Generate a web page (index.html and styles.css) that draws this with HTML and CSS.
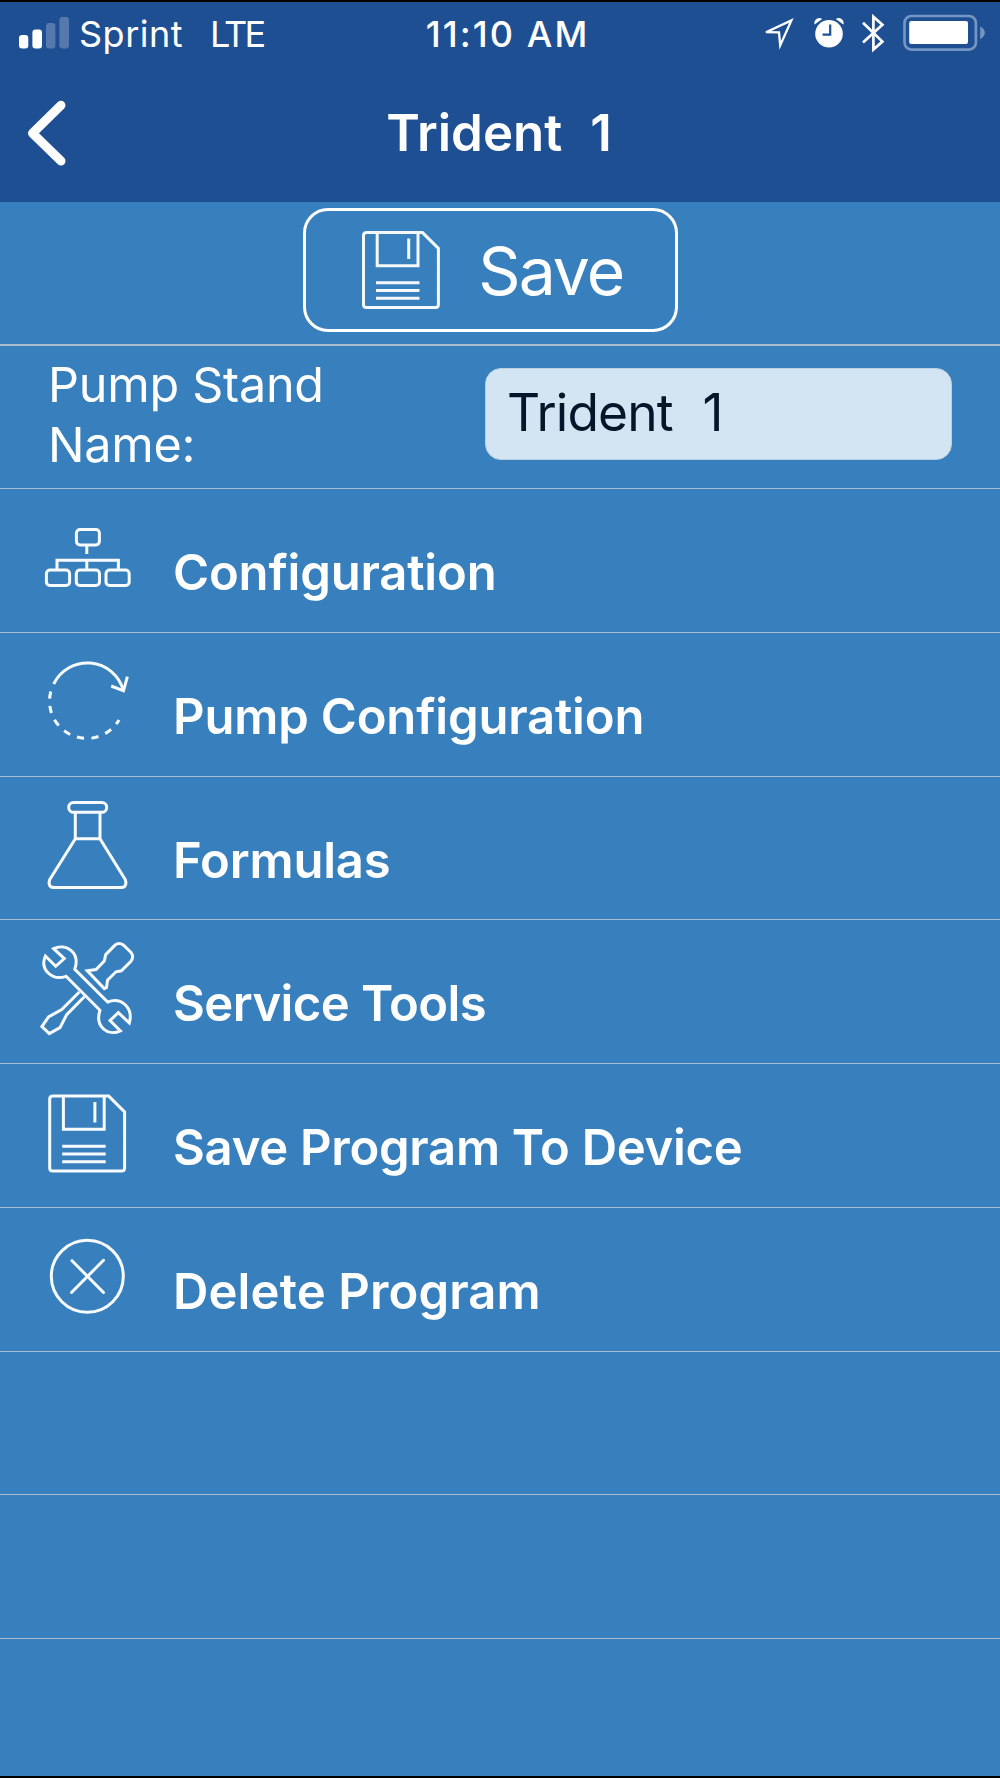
FILE: index.html
```html
<!DOCTYPE html>
<html lang="en">
<head>
<meta charset="utf-8">
<title>Trident 1</title>
<link rel="stylesheet" href="styles.css">
</head>
<body>
<div class="screen">
  <header class="header">
    <div class="status">
      <div class="carrier">
        <svg class="signal" width="50" height="40" viewBox="19 13 50 40" fill="#fff">
          <rect x="19" y="35" width="9.3" height="13.6" rx="3"/>
          <rect x="32.4" y="29.5" width="9.6" height="19.1" rx="3"/>
          <g opacity=".24"><rect x="46" y="23" width="9.4" height="25.6" rx="3"/><rect x="59.4" y="17" width="9.6" height="31.6" rx="3"/></g>
        </svg>
        <span class="name">Sprint</span>
        <span class="network">LTE</span>
      </div>
      <div class="time">11:10 AM</div>
      <div class="indicators">
        <svg width="31" height="40" viewBox="763 13 31 40" fill="none" stroke="#fff" stroke-width="2.3"><path d="M766 32.2L791.4 20.4L780.2 45.4L779 32.4Z"/></svg>
        <svg width="30" height="40" viewBox="814 13 30 40">
          <circle cx="829" cy="33.8" r="13.8" fill="#fff"/>
          <path d="M814.6 24.6a5 5 0 0 1 7.6-5.6zM843.4 24.6a5 5 0 0 0-7.6-5.6z" fill="#fff"/>
          <path d="M830.2 24.6V34.6H822.6" fill="none" stroke="#1f4f93" stroke-width="2.2"/>
        </svg>
        <svg width="23" height="40" viewBox="862 13 23 40" fill="none" stroke="#fff" stroke-width="2.7"><path d="M863 22.8L882.4 41.6L873.4 49.6V16.8L882.4 24.8L863 42.6"/></svg>
        <svg width="84" height="40" viewBox="902 13 84 40">
          <rect x="904.5" y="16" width="71.4" height="33.6" rx="7" fill="none" stroke="#7396c2" stroke-width="2.7"/>
          <rect x="909.2" y="21" width="58.8" height="23" rx="2" fill="#fff"/>
          <path d="M980.2 26.6q4.6 2.2 4.6 6.2t-4.6 6.4z" fill="#7396c2"/>
        </svg>
      </div>
    </div>
    <div class="nav">
      <svg class="back" width="40" height="68" viewBox="0 0 40 68" fill="none" stroke="#fff" stroke-width="9" stroke-linecap="round" stroke-linejoin="round"><path d="M34 6.3L5.5 34.2L34 62"/></svg>
      <h1 class="title">Trident  1</h1>
    </div>
  </header>

  <div class="save-row">
    <button class="save" type="button">
      <svg width="78" height="78" viewBox="0 0 78 78" fill="none" stroke="#f4f8fb" stroke-width="3"><path d="M4 1.6H60.5L76.4 17.4V73.5q0 3-3 3H4.5q-3 0-3-3V4.5q0-3 3-3M15.2 2V34.8H56V2M46.7 7.5V28M14 51.8H57.5M14 59.5H57.5M14 67.3H57.5"/></svg>
      <span>Save</span>
    </button>
  </div>

  <div class="name-row">
    <label class="name-label" for="stand">Pump Stand<br>Name:</label>
    <input class="name-input" id="stand" type="text" value="Trident  1">
  </div>

  <div class="row item">
    <svg class="icon" viewBox="0 1.500 100 100"><rect x="39.4" y="23" width="23" height="15.4" rx="3.6"/><path d="M49.8 39V47.6M20 62.5V53.8H81.4V62.5M49.8 53.8V62.5"/><rect x="9.4" y="63.6" width="23.2" height="15.4" rx="3.6"/><rect x="39.3" y="63.6" width="23.2" height="15.4" rx="3.6"/><rect x="69" y="63.6" width="23.2" height="15.4" rx="3.6"/></svg>
    <span class="label">Configuration</span>
  </div>
  <div class="row item">
    <svg class="icon" viewBox="0 0 100 100"><path d="M16.7 33A37.3 37.3 0 0 1 86.3 39.5M74.2 35L86.5 39.8L90.4 25.7"/><path stroke-dasharray="7.2 7.35" d="M13.8 40.5A37.3 37.3 0 0 0 82 69"/></svg>
    <span class="label">Pump Configuration</span>
  </div>
  <div class="row item">
    <svg class="icon" viewBox="0 .7 100 100"><rect x="31.7" y="8.2" width="38" height="9.8" rx="4.9"/><path d="M38.3 18V44.5L12.6 85.5Q10.5 93.2 17.5 93.2H83.5Q90.5 93.2 88.4 85.5L63 44.5V18M38.3 44.5H63"/></svg>
    <span class="label">Formulas</span>
  </div>
  <div class="row item">
    <svg class="icon" viewBox="0 .7 100 100"><path d="M16.6 10.3C29 4.5 43.5 14 37.8 31L70.7 63.7C85 58.5 96.5 70 92.3 84.7L81.3 74.3L73 82.3L83.3 92.5C71 98.5 57.5 88 63 72L29 38C15 43 2.5 31 8.4 17.7L18.7 28L27.3 20.3Z"/><path d="M50.3 32.5L59 31.3L67.3 22.7L68.7 16.3L78 6.9Q81.8 3.5 86.3 6.7L94.3 14.5Q97.2 18.7 93.7 23.3L84.3 32.5L79 33.5L70.5 42L69.5 49.3L67.3 50.3Z"/><path d="M42.3 53.7L24.7 71.3L11.5 78.7L4.9 88.3L12.3 95.3L23 89.3L29.7 76.3L47.3 58.5"/></svg>
    <span class="label tools">Service Tools</span>
  </div>
  <div class="row item">
    <svg class="icon" viewBox="-11.2 -11.5 100 100"><path d="M4 1.6H60.5L76.4 17.4V73.5q0 3-3 3H4.5q-3 0-3-3V4.5q0-3 3-3M15.2 2V34.8H56V2M46.7 7.5V28M14 51.8H57.5M14 59.5H57.5M14 67.3H57.5"/></svg>
    <span class="label program">Save Program To Device</span>
  </div>
  <div class="row item">
    <svg class="icon" viewBox="0 0 100 100"><circle cx="50.3" cy="50.3" r="36"/><path stroke-linecap="round" d="M35 34.7L66.5 66.5M66.5 34.3L34.5 66.5"/></svg>
    <span class="label delete">Delete Program</span>
  </div>
  <div class="row"></div>
  <div class="row"></div>
</div>
</body>
</html>
```
FILE: styles.css
```css
* { box-sizing: border-box; }
body {
  margin: 0;
  background: #387fbd;
  font-family: Inter, "Liberation Sans", sans-serif;
  color: #fff;
}
svg { display: block; flex: none; }
.screen {
  width: 1000px;
  height: 1778px;
  overflow: hidden;
  border-top: 2px solid #000;
  border-bottom: 2px solid #000;
}
.header { height: 200px; background: #1f4f93; }
.status {
  display: grid;
  grid-template-columns: 406.7px 1fr auto;
  align-items: center;
  height: 62px;
  padding: 0 14px 0 19px;
  font-size: 36px;
  line-height: 44px;
}
.carrier, .indicators { display: flex; align-items: center; }
.name { margin: 1px 0 0 10px; letter-spacing: .5px; }
.network { margin: 1px 0 0 27px; letter-spacing: -2.8px; }
.time { margin-top: 1px; font-weight: 500; letter-spacing: 2.1px; }
.indicators svg + svg { margin-left: 17px; }
.indicators svg:nth-child(2) { margin-left: 20px; }
.indicators svg:nth-child(3) { margin-left: 18px; }
.nav {
  display: flex;
  align-items: center;
  height: 138px;
  padding-left: 27px;
}
.title {
  margin: 0 0 2px 319.2px;
  font-size: 51px;
  font-weight: 600;
  white-space: pre;
  word-spacing: 1.1px;
}
.save-row {
  display: flex;
  height: 144px;
  padding: 6px 0 0 303px;
  border-bottom: 2px solid #a9bccf;
}
.save {
  display: flex;
  align-items: center;
  width: 375px;
  height: 124px;
  padding: 0 0 0 56px;
  border: 3px solid #fff;
  border-radius: 25px;
  background: none;
  color: #fff;
  font: 400 66px Inter, sans-serif;
  letter-spacing: -1.9px;
}
.save span { margin: 2px 0 0 38.2px; }
.name-row {
  display: flex;
  justify-content: space-between;
  height: 143px;
  padding: 9px 48px 0 48px;
  border-bottom: 1px solid #a9bccf;
}
.name-label { font-size: 48.5px; line-height: 59.5px; letter-spacing: -.25px; }
.name-input {
  width: 467px;
  height: 92px;
  margin-top: 13px;
  padding: 0 20px 5px 21px;
  border: 1px solid #b9d2e3;
  border-radius: 16px;
  background: #d3e5f3;
  color: #04172a;
  font: 400 51.5px Inter, sans-serif;
  letter-spacing: -.86px;
  word-spacing: 1.2px;
  white-space: pre;
}
.row { height: 143.75px; border-bottom: 1px solid #a9bccf; }
.item {
  display: flex;
  align-items: flex-start;
  gap: 36px;
  padding-left: 37px;
}
.icon {
  width: 100px;
  height: 100px;
  margin-top: 18.5px;
  fill: none;
  stroke: #f8fbfd;
  stroke-width: 3;
}
.label {
  margin-top: 54.2px;
  font-size: 49px;
  font-weight: 600;
  line-height: 60px;
  letter-spacing: -.18px;
}
.tools { letter-spacing: -.56px; }
.program { letter-spacing: -.28px; }
.delete { letter-spacing: .13px; }
```
